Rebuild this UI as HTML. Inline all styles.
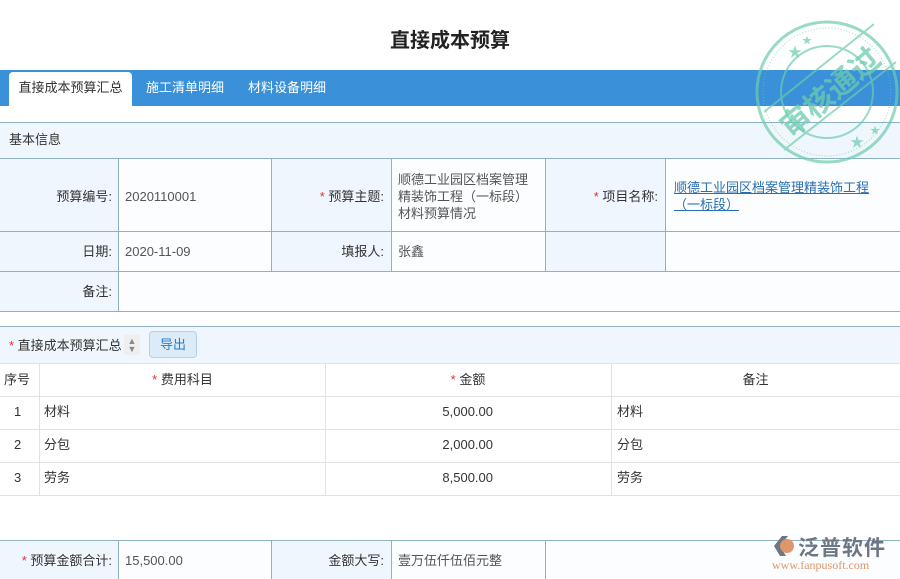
<!DOCTYPE html>
<html><head><meta charset="utf-8"><style>
*{margin:0;padding:0;box-sizing:border-box}
body{width:900px;height:579px;overflow:hidden;background:#fff;font-family:"Liberation Sans","Noto Sans CJK SC",sans-serif;font-size:13px;color:#333;position:relative}
.a{position:absolute}
.l{background:#f0f6fd}
.v{background:#fbfdfe}
.hl{position:absolute;height:1px;background:#8fb1c4}
.vl{position:absolute;width:1px;background:#8fb1c4}
.gl{position:absolute;height:1px;background:#e2e2e2}
.gv{position:absolute;width:1px;background:#e2e2e2}
.r{color:#e03030}
.t{position:absolute;line-height:17px}
</style></head><body>
<div class="a" style="left:0;top:24px;width:900px;text-align:center;font-size:20px;font-weight:bold;color:#222">直接成本预算</div>
<div class="a" style="left:0;top:70px;width:900px;height:36px;background:#3a90d9"></div>
<div class="a" style="left:9px;top:72px;width:123px;height:34px;background:#fff;border-radius:4px 4px 0 0;text-align:center;line-height:31px;color:#333">直接成本预算汇总</div>
<div class="a" style="left:146px;top:72px;line-height:31px;color:#fff">施工清单明细</div>
<div class="a" style="left:248px;top:72px;line-height:31px;color:#fff">材料设备明细</div>

<div class="a l" style="left:0;top:122px;width:900px;height:36px"></div>
<div class="t" style="left:9px;top:131px">基本信息</div>
<div class="a l" style="left:0;top:158px;width:118px;height:153px"></div>
<div class="a v" style="left:118px;top:158px;width:153px;height:153px"></div>
<div class="a l" style="left:271px;top:158px;width:120px;height:113px"></div>
<div class="a v" style="left:391px;top:158px;width:154px;height:113px"></div>
<div class="a l" style="left:545px;top:158px;width:120px;height:113px"></div>
<div class="a v" style="left:665px;top:158px;width:235px;height:113px"></div>
<div class="a v" style="left:118px;top:271px;width:782px;height:40px"></div>
<div class="hl" style="left:0;top:122px;width:900px"></div>
<div class="hl" style="left:0;top:158px;width:900px"></div>
<div class="hl" style="left:0;top:231px;width:900px"></div>
<div class="hl" style="left:0;top:271px;width:900px"></div>
<div class="hl" style="left:0;top:311px;width:900px"></div>
<div class="vl" style="left:118px;top:158px;height:153px"></div>
<div class="vl" style="left:271px;top:158px;height:113px"></div>
<div class="vl" style="left:391px;top:158px;height:113px"></div>
<div class="vl" style="left:545px;top:158px;height:113px"></div>
<div class="vl" style="left:665px;top:158px;height:113px"></div>
<div class="t" style="left:0;width:112px;text-align:right;top:188px">预算编号:</div>
<div class="t" style="left:125px;top:188px;color:#555">2020110001</div>
<div class="t" style="left:271px;width:113px;text-align:right;top:188px"><span class="r">* </span>预算主题:</div>
<div class="t" style="left:398px;top:171px;color:#555">顺德工业园区档案管理<br>精装饰工程（一标段）<br>材料预算情况</div>
<div class="t" style="left:545px;width:113px;text-align:right;top:188px"><span class="r">* </span>项目名称:</div>
<div class="t" style="left:674px;top:179px;color:#2a6fb0;text-decoration:underline">顺德工业园区档案管理精装饰工程<br>（一标段）</div>
<div class="t" style="left:0;width:112px;text-align:right;top:243px">日期:</div>
<div class="t" style="left:125px;top:243px;color:#555">2020-11-09</div>
<div class="t" style="left:271px;width:113px;text-align:right;top:243px">填报人:</div>
<div class="t" style="left:398px;top:243px;color:#555">张鑫</div>
<div class="t" style="left:0;width:112px;text-align:right;top:283px">备注:</div>

<div class="a l" style="left:0;top:327px;width:900px;height:36px"></div>
<div class="hl" style="left:0;top:326px;width:900px"></div>
<div class="t" style="left:9px;top:337px"><span class="r">* </span>直接成本预算汇总</div>
<div class="a" style="left:124px;top:335px;width:16px;height:20px;background:#eee;color:#888;font-size:9px;line-height:8px;text-align:center;padding-top:2px">▲<br>▼</div>
<div class="a" style="left:149px;top:331px;width:48px;height:27px;background:#dcebf8;border:1px solid #b5d0e8;border-radius:4px;color:#2a7cc7;text-align:center;line-height:25px">导出</div>
<div class="gl" style="left:0;top:363px;width:900px"></div>
<div class="gl" style="left:0;top:396px;width:900px"></div>
<div class="gl" style="left:0;top:429px;width:900px"></div>
<div class="gl" style="left:0;top:462px;width:900px"></div>
<div class="gl" style="left:0;top:495px;width:900px"></div>
<div class="gv" style="left:39px;top:363px;height:132px"></div>
<div class="gv" style="left:325px;top:363px;height:132px"></div>
<div class="gv" style="left:611px;top:363px;height:132px"></div>
<div class="t" style="left:4px;top:371px">序号</div>
<div class="t" style="left:40px;width:285px;text-align:center;top:371px"><span class="r">* </span>费用科目</div>
<div class="t" style="left:325px;width:286px;text-align:center;top:371px"><span class="r">* </span>金额</div>
<div class="t" style="left:611px;width:289px;text-align:center;top:371px">备注</div>
<div class="t" style="left:14px;top:403px">1</div><div class="t" style="left:44px;top:403px">材料</div><div class="t" style="left:325px;width:168px;text-align:right;top:403px">5,000.00</div><div class="t" style="left:617px;top:403px">材料</div>
<div class="t" style="left:14px;top:436px">2</div><div class="t" style="left:44px;top:436px">分包</div><div class="t" style="left:325px;width:168px;text-align:right;top:436px">2,000.00</div><div class="t" style="left:617px;top:436px">分包</div>
<div class="t" style="left:14px;top:469px">3</div><div class="t" style="left:44px;top:469px">劳务</div><div class="t" style="left:325px;width:168px;text-align:right;top:469px">8,500.00</div><div class="t" style="left:617px;top:469px">劳务</div>

<div class="a l" style="left:0;top:541px;width:118px;height:38px"></div>
<div class="a v" style="left:118px;top:541px;width:153px;height:38px"></div>
<div class="a l" style="left:271px;top:541px;width:120px;height:38px"></div>
<div class="a v" style="left:391px;top:541px;width:509px;height:38px"></div>
<div class="hl" style="left:0;top:540px;width:900px"></div>
<div class="vl" style="left:118px;top:540px;height:39px"></div>
<div class="vl" style="left:271px;top:540px;height:39px"></div>
<div class="vl" style="left:391px;top:540px;height:39px"></div>
<div class="vl" style="left:545px;top:540px;height:39px"></div>
<div class="t" style="left:0;width:112px;text-align:right;top:552px"><span class="r">* </span>预算金额合计:</div>
<div class="t" style="left:125px;top:552px;color:#555">15,500.00</div>
<div class="t" style="left:271px;width:113px;text-align:right;top:552px">金额大写:</div>
<div class="t" style="left:398px;top:552px;color:#555">壹万伍仟伍佰元整</div>

<svg class="a" style="left:750px;top:12px" width="150" height="155" viewBox="0 0 150 155">
<g fill="none" stroke="#6ccbae" opacity="0.7">
<circle cx="77" cy="80" r="70" stroke-width="3"/>
<circle cx="77" cy="80" r="64" stroke-width="1" stroke-dasharray="1 2"/>
<circle cx="77" cy="80" r="46" stroke-width="2"/>
<path d="M14 100 L124 12 M34 138 L146 50" stroke-width="2"/>
</g>
<text x="80" y="91" fill="#6ccbae" opacity="0.75" font-size="30" font-weight="bold" text-anchor="middle" transform="rotate(-40 80 80)" font-family="Noto Sans CJK SC,sans-serif">审核通过</text>
<text x="38" y="45" fill="#6ccbae" opacity="0.7" font-size="14">★</text>
<text x="52" y="32" fill="#6ccbae" opacity="0.7" font-size="10">★</text>
<text x="100" y="135" fill="#6ccbae" opacity="0.7" font-size="14">★</text>
<text x="120" y="122" fill="#6ccbae" opacity="0.7" font-size="10">★</text>
</svg>

<svg class="a" style="left:772px;top:534px" width="24" height="24" viewBox="0 0 24 24"><path d="M2 12 L10 2 L16 2 L8 12 L14 22 L8 22Z" fill="#6d7685"/><circle cx="15" cy="12" r="7" fill="#e0956b"/></svg>
<div class="a" style="left:798px;top:532px;font-size:21px;color:#6d7685;font-weight:bold;letter-spacing:1px">泛普软件</div>
<div class="a" style="left:772px;top:558px;font-size:12px;color:#e0956b;font-family:'Liberation Serif',serif">www.fanpusoft.com</div>
</body></html>
